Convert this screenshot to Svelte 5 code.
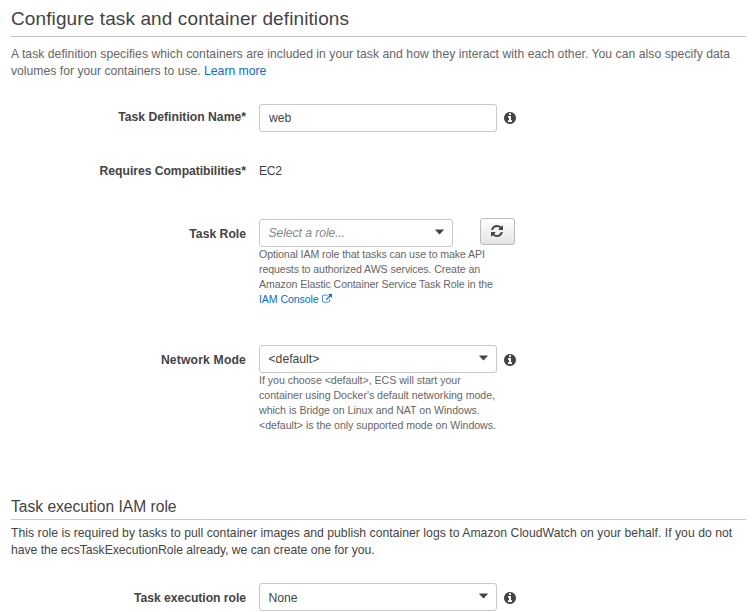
<script>
  let name = $state('web');
</script>

{#snippet info()}
  <svg class="info" viewBox="0 128 1536 1536" aria-hidden="true"><path d="M1024 1376v-160q0-14-9-23t-23-9h-96v-512q0-14-9-23t-23-9h-320q-14 0-23 9t-9 23v160q0 14 9 23t23 9h96v320h-96q-14 0-23 9t-9 23v160q0 14 9 23t23 9h448q14 0 23-9t9-23zm-128-896v-160q0-14-9-23t-23-9h-192q-14 0-23 9t-9 23v160q0 14 9 23t23 9h192q14 0 23-9t9-23zm640 416q0 209-103 385.5t-279.5 279.5-385.5 103-385.5-103-279.5-279.5-103-385.5 103-385.5 279.5-279.5 385.5-103 385.5 103 279.5 279.5 103 385.5z" /></svg>
{/snippet}

{#snippet caret()}
  <svg class="caret" viewBox="0 0 10 6" aria-hidden="true"><path d="M0.4 0.3h9.2q.5 0 .1.5L5.6 5.2q-.6.6-1.2 0L.3.8Q-.1.3.4.3z" /></svg>
{/snippet}

<main>
  <h1>Configure task and container definitions</h1>
  <p class="intro">
    <span class="loose">A task definition specifies which containers are included in your task and how they interact with each other. You can also specify data</span><br />
    volumes for your containers to use. <a href="#learn">Learn more</a>
  </p>

  <div class="row name">
    <label for="name">Task Definition Name*</label>
    <div class="line"><input id="name" class="box" bind:value={name} />{@render info()}</div>
  </div>

  <div class="row compat">
    <span class="label">Requires Compatibilities*</span>
    <span class="value">EC2</span>
  </div>

  <div class="row role">
    <span class="label">Task Role</span>
    <div>
      <div class="line">
        <div class="box short"><em>Select a role...</em>{@render caret()}</div>
        <button aria-label="Refresh">
          <svg viewBox="0 128 1536 1536"><path d="M1511 1056q0 5-1 7-64 268-268 434.5t-478 166.5q-146 0-282.5-55t-243.5-157l-129 129q-19 19-45 19t-45-19-19-45v-448q0-26 19-45t45-19h448q26 0 45 19t19 45-19 45l-137 137q71 66 161 102t187 36q134 0 250-65t186-179q11-17 53-117 8-23 30-23h192q13 0 22.5 9.5t9.5 22.5zm25-800v448q0 26-19 45t-45 19h-448q-26 0-45-19t-19-45 19-45l138-138q-148-137-349-137-134 0-250 65t-186 179q-11 17-53 117-8 23-30 23h-199q-13 0-22.5-9.5t-9.5-22.5v-7q65-268 270-434.5t480-166.5q146 0 284 55.5t245 156.5l130-129q19-19 45-19t45 19 19 45z" /></svg>
        </button>
      </div>
      <p class="help tight">
        Optional IAM role that tasks can use to make API<br />
        requests to authorized AWS services. Create an<br />
        Amazon Elastic Container Service Task Role in the<br />
        <a href="#iam">IAM Console <svg class="ext" viewBox="0 0 1792 1792"><path d="M1408 928v320q0 119-84.5 203.5t-203.5 84.5h-832q-119 0-203.5-84.5t-84.5-203.5v-832q0-119 84.5-203.5t203.5-84.5h704q14 0 23 9t9 23v64q0 14-9 23t-23 9h-704q-66 0-113 47t-47 113v832q0 66 47 113t113 47h832q66 0 113-47t47-113v-320q0-14 9-23t23-9h64q14 0 23 9t9 23zm384-864v512q0 26-19 45t-45 19-45-19l-176-176-652 652q-10 10-23 10t-23-10l-114-114q-10-10-10-23t10-23l652-652-176-176q-19-19-19-45t19-45 45-19h512q26 0 45 19t19 45z" /></svg></a>
      </p>
    </div>
  </div>

  <div class="row network">
    <span class="label">Network Mode</span>
    <div>
      <div class="line"><div class="box"><span>&lt;default&gt;</span>{@render caret()}</div>{@render info()}</div>
      <p class="help">
        If you choose &lt;default&gt;, ECS will start your<br />
        container using Docker's default networking mode,<br />
        which is Bridge on Linux and NAT on Windows.<br />
        &lt;default&gt; is the only supported mode on Windows.
      </p>
    </div>
  </div>

  <h2>Task execution IAM role</h2>
  <p class="about">
    <span class="loose">This role is required by tasks to pull container images and publish container logs to Amazon CloudWatch on your behalf. If you do not</span><br />
    <span class="snug">have the ecsTaskExecutionRole already, we can create one for you.</span>
  </p>

  <div class="row exec">
    <span class="label">Task execution role</span>
    <div class="line"><div class="box"><span>None</span>{@render caret()}</div>{@render info()}</div>
  </div>
</main>

<style>
  :global(body) { margin: 0; background: #fff; overflow: hidden; }
  main {
    box-sizing: border-box;
    height: 612px;
    padding: 0 10px 0 11px;
    overflow: hidden;
    color: #444;
    font: 12.2px/17.3px "Liberation Sans", Arial, sans-serif;
    white-space: nowrap;
  }
  h1, h2, p { margin: 0; font-weight: 400; }
  h1 { height: 36px; border-bottom: 1px solid #c4c4c4; font-size: 19px; letter-spacing: 0.11px; line-height: 38px; }
  h2 { height: 21px; margin-top: 65px; border-bottom: 1px solid #c8c8c8; font-size: 15.6px; line-height: 18px; }
  .intro { margin-top: 9px; color: #666; }
  .about { margin-top: 5px; }
  .loose { letter-spacing: 0.032px; }
  .snug { letter-spacing: -0.03px; }
  a { color: #0a6ccb; text-decoration: none; }
  .row { display: grid; grid-template-columns: 235px 1fr; column-gap: 13px; align-items: start; }
  .row > label, .label { text-align: right; font-weight: 700; line-height: 27px; }
  .line { display: flex; align-items: center; }
  .box {
    box-sizing: border-box;
    width: 238px;
    height: 28px;
    padding: 0 8px 0 9px;
    border: 1px solid #c8c8c8;
    border-radius: 3px;
    background: #fff;
    color: #444;
    font: inherit;
    display: flex;
    align-items: center;
    justify-content: space-between;
    outline: none;
  }
  .short { width: 194px; }
  .box > span, em { padding-top: 2px; margin-left: -0.5px; }
  em { color: #888; letter-spacing: -0.08px; }
  svg { fill: currentColor; }
  .info { width: 12px; height: 12px; margin-left: 7px; }
  .network .info, .exec .info { margin-top: 2px; }
  .caret { width: 9px; height: 6px; margin-top: -2px; }
  button {
    display: flex;
    align-items: center;
    justify-content: center;
    width: 35px;
    height: 27px;
    margin: -3px 0 0 27px;
    padding: 0 2px 0 0;
    border: 1px solid #bbb;
    border-radius: 3px;
    background: linear-gradient(#fff, #e4e4e4);
    color: #444;
  }
  button svg { width: 12px; height: 12px; }
  .help { padding-top: 0.5px; color: #666; font-size: 10.6px; line-height: 15px; letter-spacing: -0.02px; }
  .tight { letter-spacing: -0.09px; }
  .ext { width: 10px; height: 10px; vertical-align: -1px; }
  .name { margin-top: 23px; height: 28px; }
  .compat { margin-top: 26px; height: 27px; }
  .compat .label { letter-spacing: -0.05px; }
  .value { line-height: 27px; letter-spacing: -0.3px; }
  .role { margin-top: 34px; height: 88px; }
  .role .label, .network .label, .exec .label { padding-top: 2px; }
  .network .label { letter-spacing: 0.15px; }
  .exec .label { letter-spacing: -0.05px; }
  .network { margin-top: 38px; height: 88px; }
  .exec { margin-top: 24px; height: 28px; }
</style>
